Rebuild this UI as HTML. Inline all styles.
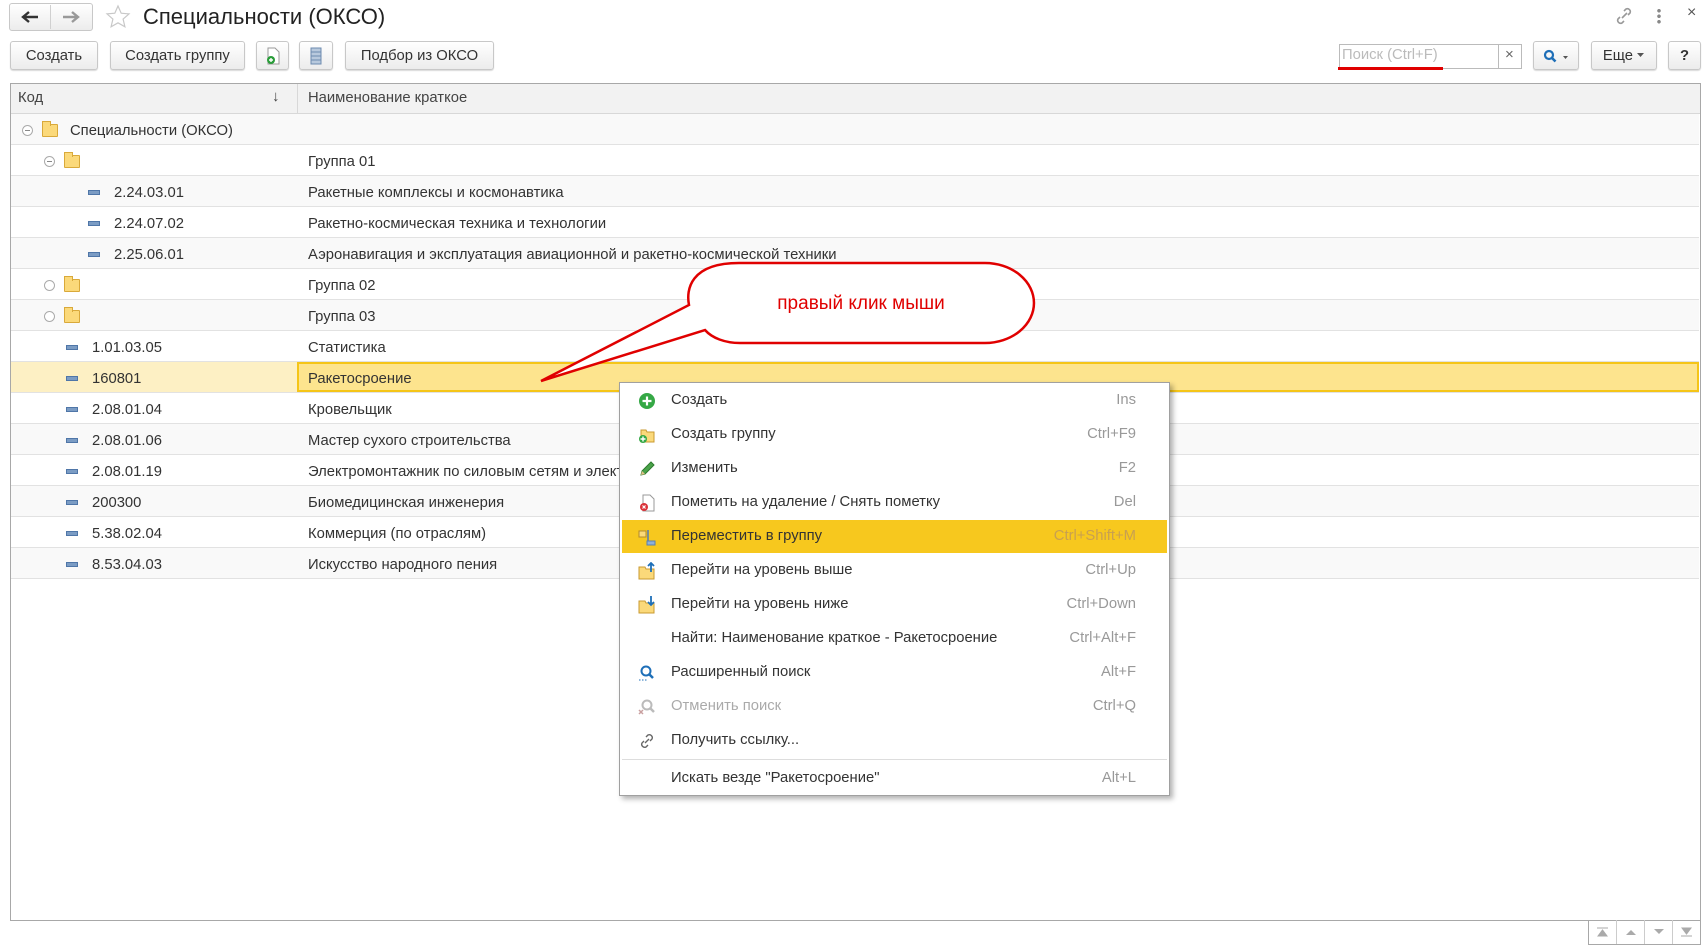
<!DOCTYPE html>
<html><head><meta charset="utf-8">
<style>
*{box-sizing:border-box;margin:0;padding:0}
body{width:1706px;height:949px;background:#fff;font-family:"Liberation Sans",Arial,sans-serif;color:#333;position:relative;overflow:hidden;font-size:14.8px}
.a{position:absolute}
.btn{position:absolute;height:29px;top:41px;border:1px solid #c8c8c8;border-radius:3px;background:linear-gradient(#fff,#ececec);box-shadow:0 1px 1px rgba(0,0,0,.15);display:flex;align-items:center;justify-content:center;font-size:14.8px;color:#333}
.row{position:absolute;left:11px;width:1688px;height:31px;border-bottom:1px solid #e2e2e2}
.row span{position:absolute;top:9px;white-space:nowrap}
.dash{position:absolute;top:14px;width:12px;height:5px;background:#7b9cc4;border:1px solid #4f76a8}
.fold{position:absolute;top:10px;width:16px;height:13px;background:#fbd97a;border:1px solid #d9a93a;border-radius:1px}
.fold:before{content:"";position:absolute;left:-1px;top:-4px;width:7px;height:4px;background:#fbd97a;border:1px solid #d9a93a;border-bottom:none}
.circ{position:absolute;top:11px;width:11px;height:11px;border:1px solid #aaa;border-radius:50%;background:#fff}
.circ.m:after{content:"";position:absolute;left:2px;top:4px;width:5px;height:1px;background:#888}
.mi{position:absolute;left:0;width:549px;height:34px;font-size:14.8px}
.mi .t{position:absolute;left:51px;top:9px;white-space:nowrap;color:#333}
.mi .k{position:absolute;right:33px;top:9px;color:#999;white-space:nowrap}
.mi svg{position:absolute;left:18px;top:9px}
</style></head><body>
<!-- nav -->
<div class="a" style="left:9px;top:3px;width:84px;height:28px;border:1px solid #c8c8c8;border-radius:3px;background:linear-gradient(#fff,#ececec)"></div>
<div class="a" style="left:50px;top:5px;width:1px;height:24px;background:#d0d0d0"></div>
<svg class="a" style="left:20px;top:9px" width="20" height="16"><path d="M18 8H4M9 3L3 8l6 5" stroke="#333" stroke-width="2.4" fill="none"/></svg>
<svg class="a" style="left:61px;top:9px" width="20" height="16"><path d="M2 8h14M11 3l6 5-6 5" stroke="#999" stroke-width="2.4" fill="none"/></svg>
<svg class="a" style="left:105px;top:4px" width="26" height="26"><path d="M13 2l3.2 7.2 7.8.7-5.9 5.2 1.8 7.7L13 18.8 6.1 22.8l1.8-7.7L2 9.9l7.8-.7z" fill="none" stroke="#c8c8c8" stroke-width="1.2"/></svg>
<div class="a" style="left:143px;top:4px;font-size:22px;color:#222">Специальности (ОКСО)</div>
<svg class="a" style="left:1614px;top:6px" width="20" height="20"><path d="M8 12l5-5M10 5l2-2a3 3 0 0 1 4 4l-2 2M10 15l-2 2a3 3 0 0 1-4-4l2-2" stroke="#999" stroke-width="1.6" fill="none"/></svg>
<div class="a" style="left:1657px;top:8px;width:4px;height:16px;background:radial-gradient(circle,#888 1.6px,transparent 2px) 0 0/4px 5.5px"></div>
<div class="a" style="left:1687px;top:4px;font-size:16px;color:#555">×</div>
<!-- toolbar -->
<div class="btn" style="left:10px;width:88px">Создать</div>
<div class="btn" style="left:110px;width:135px">Создать группу</div>
<div class="btn" style="left:256px;width:33px"><svg width="16" height="18"><path d="M3 1h7l4 4v12H3z" fill="#fff" stroke="#999"/><circle cx="6" cy="13" r="4" fill="#2a9d3a"/><path d="M6 11v4M4 13h4" stroke="#fff" stroke-width="1.4"/></svg></div>
<div class="btn" style="left:299px;width:34px"><svg width="12" height="18"><rect x="1" y="1" width="10" height="16" fill="#b8c9dd" stroke="#6d8bb0"/><path d="M1 5h10M1 9h10M1 13h10" stroke="#6d8bb0"/></svg></div>
<div class="btn" style="left:345px;width:149px">Подбор из ОКСО</div>
<div class="a" style="left:1339px;top:44px;width:183px;height:25px;border:1px solid #bbb;background:#fff"></div>
<div class="a" style="left:1498px;top:44px;width:1px;height:25px;background:#bbb"></div>
<div class="a" style="left:1342px;top:47px;color:#bbb;font-size:14.8px">Поиск (Ctrl+F)</div>
<div class="a" style="left:1505px;top:46px;color:#666;font-size:15px">×</div>
<div class="a" style="left:1338px;top:67px;width:105px;height:3px;background:#e00000"></div>
<div class="btn" style="left:1533px;width:46px;justify-content:flex-start;padding-left:9px"><svg width="26" height="14"><circle cx="6" cy="6" r="4" stroke="#1e6fb8" stroke-width="2.2" fill="none"/><path d="M9 9l3.5 3.5" stroke="#1e6fb8" stroke-width="2.6"/><path d="M20 7h5l-2.5 3z" fill="#555"/></svg></div>
<div class="btn" style="left:1591px;width:66px">Еще&nbsp;<svg width="8" height="5"><path d="M0 0h7l-3.5 4z" fill="#555"/></svg></div>
<div class="btn" style="left:1668px;width:33px;font-weight:bold">?</div>
<!-- table -->
<div class="a" style="left:10px;top:83px;width:1691px;height:838px;border:1px solid #a8a8a8"></div>
<div class="a" style="left:11px;top:84px;width:1689px;height:30px;background:#f2f2f2;border-bottom:1px solid #d8d8d8"></div>
<div class="a" style="left:297px;top:84px;width:1px;height:30px;background:#d8d8d8"></div>
<div class="a" style="left:18px;top:90px;color:#444">Код</div>
<div class="a" style="left:272px;top:88px;color:#444;font-size:15px">↓</div>
<div class="a" style="left:308px;top:90px;color:#444">Наименование краткое</div>

<div class="row" style="top:114px;background:#f9f9f9"><div class="circ m" style="left:11px"></div><div class="fold" style="left:31px"></div><span style="left:59px">Специальности (ОКСО)</span></div>
<div class="row" style="top:145px"><div class="circ m" style="left:33px"></div><div class="fold" style="left:53px"></div><span style="left:297px">Группа 01</span></div>
<div class="row" style="top:176px;background:#f9f9f9"><div class="dash" style="left:77px"></div><span style="left:103px">2.24.03.01</span><span style="left:297px">Ракетные комплексы и космонавтика</span></div>
<div class="row" style="top:207px"><div class="dash" style="left:77px"></div><span style="left:103px">2.24.07.02</span><span style="left:297px">Ракетно-космическая техника и технологии</span></div>
<div class="row" style="top:238px;background:#f9f9f9"><div class="dash" style="left:77px"></div><span style="left:103px">2.25.06.01</span><span style="left:297px">Аэронавигация и эксплуатация авиационной и ракетно-космической техники</span></div>
<div class="row" style="top:269px"><div class="circ" style="left:33px"></div><div class="fold" style="left:53px"></div><span style="left:297px">Группа 02</span></div>
<div class="row" style="top:300px;background:#f9f9f9"><div class="circ" style="left:33px"></div><div class="fold" style="left:53px"></div><span style="left:297px">Группа 03</span></div>
<div class="row" style="top:331px"><div class="dash" style="left:55px"></div><span style="left:81px">1.01.03.05</span><span style="left:297px">Статистика</span></div>
<div class="row" style="top:362px;background:#fdf0c4"><div class="a" style="left:286px;top:0;width:1402px;height:30px;background:#fde48e;border:2px solid #f5c518"></div><div class="dash" style="left:55px"></div><span style="left:81px">160801</span><span style="left:297px">Ракетосроение</span></div>
<div class="row" style="top:393px"><div class="dash" style="left:55px"></div><span style="left:81px">2.08.01.04</span><span style="left:297px">Кровельщик</span></div>
<div class="row" style="top:424px;background:#f9f9f9"><div class="dash" style="left:55px"></div><span style="left:81px">2.08.01.06</span><span style="left:297px">Мастер сухого строительства</span></div>
<div class="row" style="top:455px"><div class="dash" style="left:55px"></div><span style="left:81px">2.08.01.19</span><span style="left:297px">Электромонтажник по силовым сетям и электрооборудованию</span></div>
<div class="row" style="top:486px;background:#f9f9f9"><div class="dash" style="left:55px"></div><span style="left:81px">200300</span><span style="left:297px">Биомедицинская инженерия</span></div>
<div class="row" style="top:517px"><div class="dash" style="left:55px"></div><span style="left:81px">5.38.02.04</span><span style="left:297px">Коммерция (по отраслям)</span></div>
<div class="row" style="top:548px;background:#f9f9f9"><div class="dash" style="left:55px"></div><span style="left:81px">8.53.04.03</span><span style="left:297px">Искусство народного пения</span></div>

<!-- bottom nav -->
<div class="a" style="left:1588px;top:920px;width:113px;height:25px;border:1px solid #a8a8a8;border-top:none;display:flex">
<div style="flex:1;border-right:1px solid #ccc;display:flex;align-items:center;justify-content:center"><svg width="12" height="10"><path d="M0 1h11M1 9l4.5-6 4.5 6z" fill="#aaa" stroke="#aaa"/></svg></div>
<div style="flex:1;border-right:1px solid #ccc;display:flex;align-items:center;justify-content:center"><svg width="12" height="8"><path d="M1 7l5-5 5 5z" fill="#aaa"/></svg></div>
<div style="flex:1;border-right:1px solid #ccc;display:flex;align-items:center;justify-content:center"><svg width="12" height="8"><path d="M1 1l5 5 5-5z" fill="#aaa"/></svg></div>
<div style="flex:1;display:flex;align-items:center;justify-content:center"><svg width="12" height="10"><path d="M1 1l4.5 6 4.5-6zM0 9h11" fill="#aaa" stroke="#aaa"/></svg></div>
</div>

<!-- callout -->
<svg class="a" style="left:0;top:0" width="1706" height="949">
<path d="M739 263 H985 A49 40 0 0 1 985 343 H740 C725 343 712 338 705 330 L541 381 L689 305 C686 290 690 263 739 263 Z" fill="#fff" stroke="#e00000" stroke-width="2.5"/>
<text x="861" y="309" fill="#e00000" font-family="Liberation Sans,Arial,sans-serif" font-size="19" text-anchor="middle">правый клик мыши</text>
</svg>

<!-- context menu -->
<div class="a" style="left:619px;top:382px;width:551px;height:414px;background:#fff;border:1px solid #a0a0a0;box-shadow:3px 3px 5px rgba(0,0,0,.3)">
<div class="mi" style="top:0"><svg width="18" height="18"><circle cx="9" cy="9" r="8" fill="#35a845"/><path d="M9 4.5v9M4.5 9h9" stroke="#fff" stroke-width="2.2"/></svg><span class="t">Создать</span><span class="k">Ins</span></div>
<div class="mi" style="top:34px"><svg width="18" height="18"><path d="M3 4h5l1 2h7v10H3z" fill="#fbd97a" stroke="#c99a30"/><circle cx="5" cy="13" r="4" fill="#35a845"/><path d="M5 10.5v5M2.5 13h5" stroke="#fff" stroke-width="1.4"/></svg><span class="t">Создать группу</span><span class="k">Ctrl+F9</span></div>
<div class="mi" style="top:68px"><svg width="18" height="18"><path d="M3 15l1-4 9-9 3 3-9 9z" fill="#4aa34a" stroke="#2d7a2d"/><path d="M3 15l1-4 3 3z" fill="#e5c08a"/></svg><span class="t">Изменить</span><span class="k">F2</span></div>
<div class="mi" style="top:102px"><svg width="18" height="18"><path d="M5 1h7l4 4v12H5z" fill="#fff" stroke="#999"/><circle cx="6" cy="13" r="4" fill="#d9333a"/><path d="M4.5 11.5l3 3M7.5 11.5l-3 3" stroke="#fff" stroke-width="1.2"/></svg><span class="t">Пометить на удаление / Снять пометку</span><span class="k">Del</span></div>
<div class="a" style="left:2px;top:137px;width:545px;height:33px;background:#f7c81e"></div>
<div class="mi" style="top:136px"><svg width="18" height="18"><path d="M1 3h7v6H1z" fill="#fbd97a" stroke="#b08a30"/><path d="M10 2v12h6" stroke="#5a7fb0" stroke-width="1.6" fill="none"/><rect x="9" y="13" width="8" height="4" fill="#8fb0d8" stroke="#5a7fb0"/></svg><span class="t">Переместить в группу</span><span class="k" style="color:#c8a050">Ctrl+Shift+M</span></div>
<div class="mi" style="top:170px"><svg width="18" height="18"><path d="M1 5h6l1 2h8v10H1z" fill="#fbd97a" stroke="#c99a30"/><path d="M13 10V1M10 4l3-3 3 3" stroke="#1e6fb8" stroke-width="1.8" fill="none"/></svg><span class="t">Перейти на уровень выше</span><span class="k">Ctrl+Up</span></div>
<div class="mi" style="top:204px"><svg width="18" height="18"><path d="M1 5h6l1 2h8v10H1z" fill="#fbd97a" stroke="#c99a30"/><path d="M13 0v9M10 6l3 3 3-3" stroke="#1e6fb8" stroke-width="1.8" fill="none"/></svg><span class="t">Перейти на уровень ниже</span><span class="k">Ctrl+Down</span></div>
<div class="mi" style="top:238px"><span class="t">Найти: Наименование краткое - Ракетосроение</span><span class="k">Ctrl+Alt+F</span></div>
<div class="mi" style="top:272px"><svg width="18" height="18"><circle cx="8" cy="7" r="4.5" stroke="#1e6fb8" stroke-width="2" fill="none"/><path d="M11 10l4 4" stroke="#1e6fb8" stroke-width="2.5"/><path d="M1 16h8" stroke="#1e6fb8" stroke-dasharray="1.5 1.5"/></svg><span class="t">Расширенный поиск</span><span class="k">Alt+F</span></div>
<div class="mi" style="top:306px"><svg width="18" height="18"><circle cx="9" cy="7" r="4.5" stroke="#bbb" stroke-width="2" fill="none"/><path d="M12 10l4 4" stroke="#bbb" stroke-width="2.5"/><path d="M1 12l4 4M5 12l-4 4" stroke="#c9a0a0" stroke-width="1.5"/></svg><span class="t" style="color:#aaa">Отменить поиск</span><span class="k">Ctrl+Q</span></div>
<div class="mi" style="top:340px"><svg width="18" height="18"><path d="M7 11l4-4M8 5l2-2a3 3 0 0 1 4 4l-2 2M10 13l-2 2a3 3 0 0 1-4-4l2-2" stroke="#666" stroke-width="1.4" fill="none"/></svg><span class="t">Получить ссылку...</span></div>
<div class="a" style="left:2px;top:376px;width:545px;height:1px;background:#ddd"></div>
<div class="mi" style="top:378px"><span class="t">Искать везде "Ракетосроение"</span><span class="k">Alt+L</span></div>
</div>
</body></html>
